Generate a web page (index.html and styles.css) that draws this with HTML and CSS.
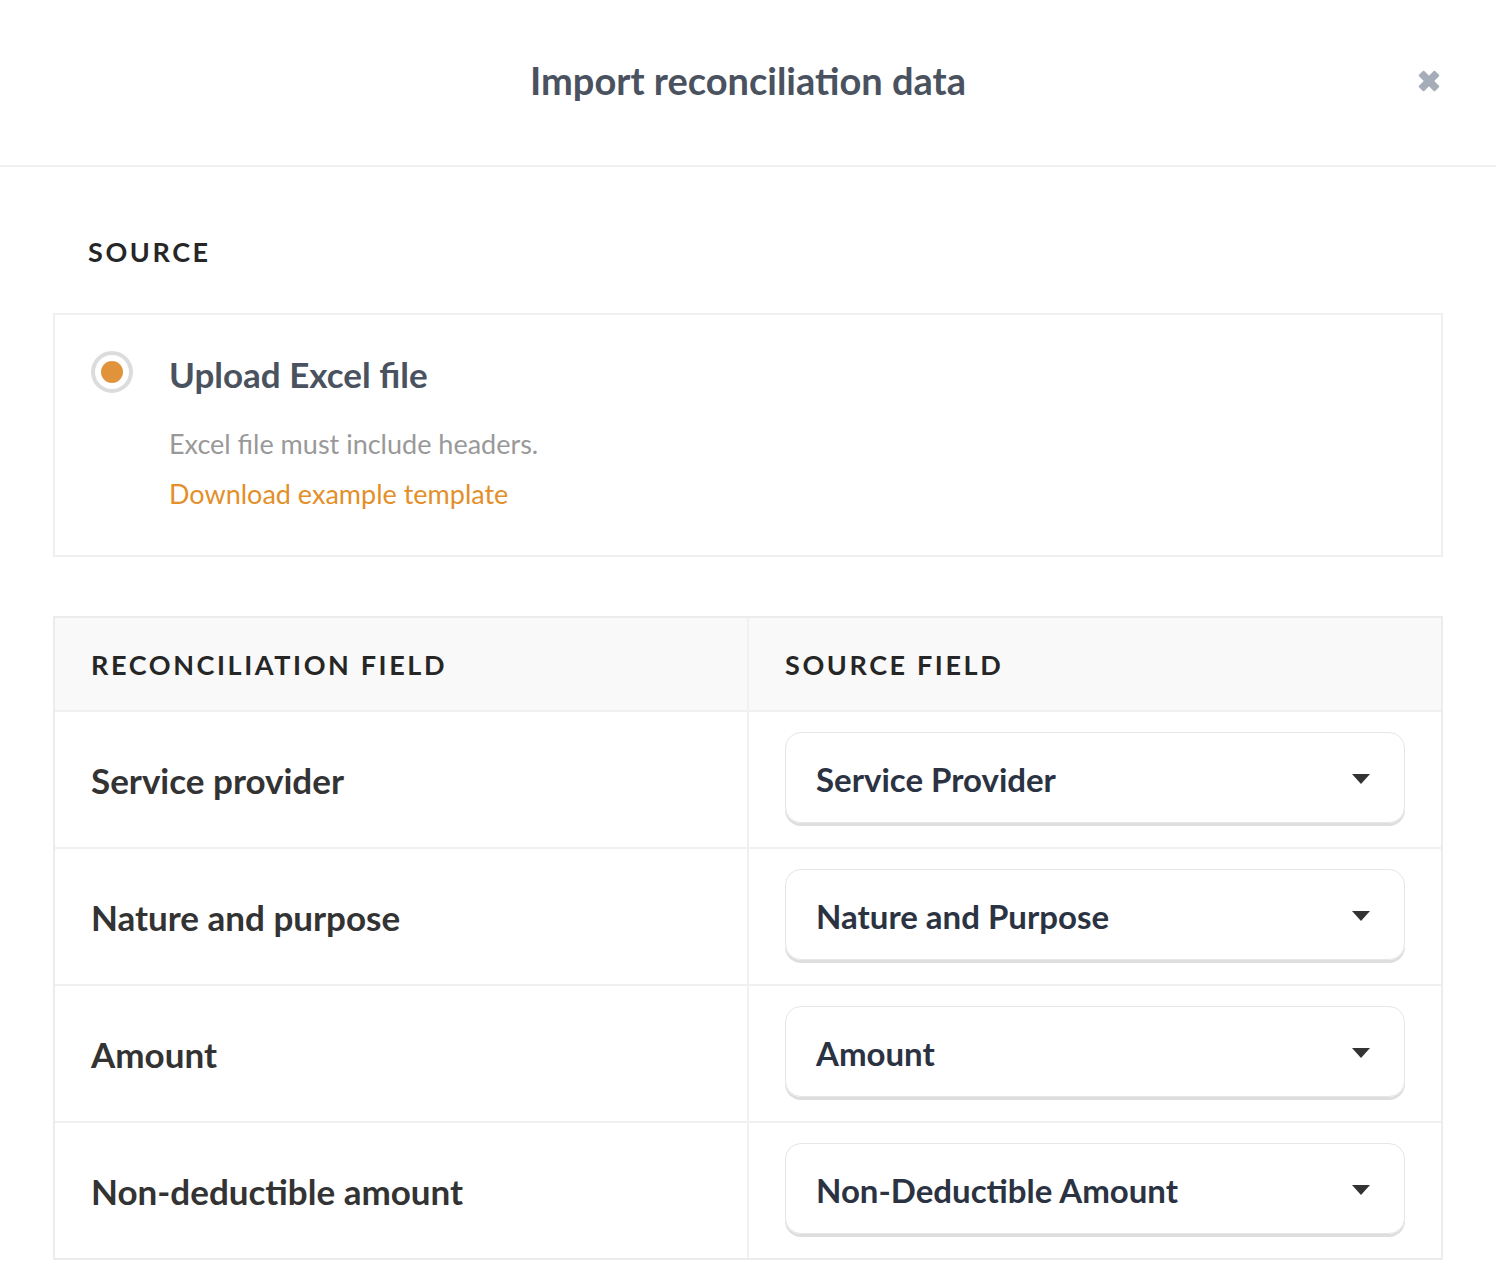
FILE: index.html
```html
<!DOCTYPE html>
<html lang="en">
<head>
<meta charset="utf-8">
<title>Import reconciliation data</title>
<link rel="stylesheet" href="styles.css">
</head>
<body>
<div class="modal">
  <header class="modal-header">
    <h1 class="modal-title">Import reconciliation data</h1>
    <button class="close-btn" aria-label="Close">
      <svg viewBox="0 0 24 24" width="26" height="28"><path d="M3.5 7 L7 3.5 L12 8.5 L17 3.5 L20.5 7 L15.5 12 L20.5 17 L17 20.5 L12 15.5 L7 20.5 L3.5 17 L8.5 12 Z" fill="#a6adb8" stroke="#a6adb8" stroke-width="2" stroke-linejoin="round"/></svg>
    </button>
  </header>
  <main class="modal-body">
    <h2 class="section-label">SOURCE</h2>
    <div class="source-card">
      <div class="radio"><span class="radio-dot"></span></div>
      <div class="source-text">
        <div class="source-title">Upload Excel file</div>
        <div class="source-hint">Excel file must include headers.</div>
        <a class="source-link" href="#">Download example template</a>
      </div>
    </div>
    <div class="map-table">
      <div class="map-row map-head">
        <div class="cell cell-left">RECONCILIATION FIELD</div>
        <div class="cell cell-right">SOURCE FIELD</div>
      </div>
      <div class="map-row">
        <div class="cell cell-left field">Service provider</div>
        <div class="cell cell-right"><div class="select"><span>Service Provider</span><i class="caret"></i></div></div>
      </div>
      <div class="map-row">
        <div class="cell cell-left field">Nature and purpose</div>
        <div class="cell cell-right"><div class="select"><span>Nature and Purpose</span><i class="caret"></i></div></div>
      </div>
      <div class="map-row">
        <div class="cell cell-left field">Amount</div>
        <div class="cell cell-right"><div class="select"><span>Amount</span><i class="caret"></i></div></div>
      </div>
      <div class="map-row">
        <div class="cell cell-left field">Non-deductible amount</div>
        <div class="cell cell-right"><div class="select"><span>Non-Deductible Amount</span><i class="caret"></i></div></div>
      </div>
    </div>
  </main>
</div>
</body>
</html>
```
FILE: styles.css
```css
* { box-sizing: border-box; }
html, body { margin: 0; padding: 0; background: #fff; }
body { font-family: Lato, "Open Sans", sans-serif; color: #333; }

.modal-header {
  position: relative;
  height: 167px;
  border-bottom: 2px solid #f0f0f0;
  display: flex;
  align-items: center;
  justify-content: center;
}
.modal-title {
  margin: 0;
  font-size: 38px;
  font-weight: 700;
  color: #4a5260;
  padding-bottom: 6px;
}
.close-btn {
  position: absolute;
  right: 54px;
  top: 67px;
  border: 0;
  background: none;
  padding: 0;
  width: 26px;
  height: 28px;
}
.close-btn svg { display: block; }

.modal-body { padding: 69px 53px 40px 53px; }

.section-label {
  margin: 0 0 45px 35px;
  font-size: 27px;
  line-height: 32px;
  font-weight: 700;
  letter-spacing: 2.6px;
  color: #262626;
}

.source-card {
  border: 2px solid #efefef;
  height: 244px;
  display: flex;
  padding: 36px 36px 0 36px;
}
.radio {
  width: 42px;
  height: 42px;
  border-radius: 50%;
  border: 4px solid #dcdcdc;
  display: flex;
  align-items: center;
  justify-content: center;
  flex: none;
}
.radio-dot {
  width: 22px;
  height: 22px;
  border-radius: 50%;
  background: #e0933a;
}
.source-text { margin-left: 36px; }
.source-title {
  font-size: 35px;
  line-height: 44px;
  font-weight: 700;
  color: #4a5260;
  margin-top: 1px;
}
.source-hint {
  margin-top: 31px;
  font-size: 27px;
  line-height: 34px;
  color: #999;
}
.source-link {
  display: block;
  margin-top: 16px;
  font-size: 27px;
  line-height: 34px;
  color: #e38f2a;
  text-decoration: none;
}

.map-table {
  margin-top: 59px;
  border: 2px solid #ececec;
}
.map-row {
  display: flex;
  height: 137px;
  border-top: 2px solid #f0f0f0;
}
.map-row.map-head {
  height: 92px;
  border-top: 0;
  background: #f9f9f9;
}
.cell {
  display: flex;
  align-items: center;
}
.cell-left {
  width: 694px;
  padding-left: 36px;
  border-right: 2px solid #f0f0f0;
}
.cell-right {
  flex: 1;
  padding: 0 36px 0 36px;
}
.map-head .cell {
  font-size: 27px;
  font-weight: 700;
  letter-spacing: 2.6px;
  color: #262626;
}
.field {
  font-size: 35px;
  font-weight: 700;
  color: #333;
}
.select {
  width: 100%;
  height: 91px;
  margin-top: -4px;
  border: 1px solid #e6e6e6;
  border-radius: 16px;
  box-shadow: 0 3px 0 #dedede;
  display: flex;
  align-items: center;
  justify-content: space-between;
  padding: 3px 34px 0 30px;
  font-size: 33px;
  font-weight: 700;
  color: #2b3343;
}
.caret {
  width: 0;
  height: 0;
  border-left: 9px solid transparent;
  border-right: 9px solid transparent;
  border-top: 10px solid #333;
}
```
